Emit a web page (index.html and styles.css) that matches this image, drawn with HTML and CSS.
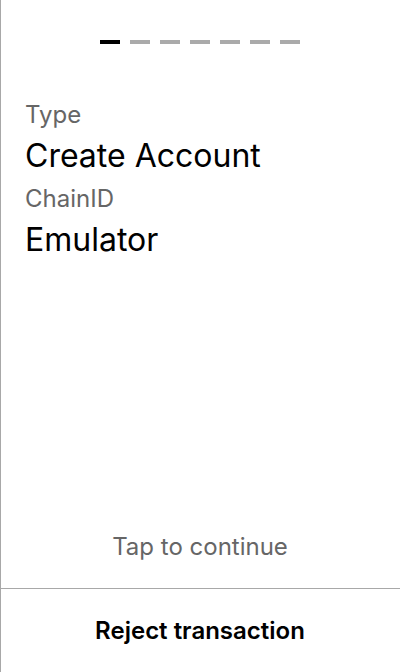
FILE: index.html
```html
<!DOCTYPE html>
<html>
<head>
<meta charset="utf-8">
<link rel="stylesheet" href="styles.css">
</head>
<body>
<div class="screen">
  <div class="main">
    <div class="steps">
      <span class="step active"></span>
      <span class="step"></span>
      <span class="step"></span>
      <span class="step"></span>
      <span class="step"></span>
      <span class="step"></span>
      <span class="step"></span>
    </div>
    <div class="details">
      <div class="label">Type</div>
      <div class="value">Create Account</div>
      <div class="label">ChainID</div>
      <div class="value">Emulator</div>
    </div>
    <div class="hint">Tap to continue</div>
  </div>
  <div class="reject">Reject transaction</div>
</div>
</body>
</html>
```
FILE: styles.css
```css
html, body {
  margin: 0;
  padding: 0;
  background: #fff;
}
body {
  font-family: Inter, "Noto Sans", sans-serif;
  color: #000;
}
.screen {
  width: 400px;
  height: 672px;
  box-sizing: border-box;
  border-left: 1px solid #a8a8a8;
  display: flex;
  flex-direction: column;
}
.main {
  flex: 1;
  display: flex;
  flex-direction: column;
  border-bottom: 1px solid #a8a8a8;
}
.steps {
  display: flex;
  justify-content: center;
  gap: 10px;
  padding-top: 40px;
  margin-left: -1px;
}
.step {
  width: 20px;
  height: 4px;
  background: #aaaaaa;
}
.step.active {
  background: #000;
}
.details {
  padding: 57px 24px 0;
  display: flex;
  flex-direction: column;
}
.label {
  font-size: 24px;
  line-height: 28px;
  color: #666;
  margin-top: 9px;
}
.value {
  font-size: 32px;
  line-height: 40px;
  margin-top: 7px;
}
.details .label:first-child {
  margin-top: 0;
}
.hint {
  margin-top: auto;
  text-align: center;
  font-size: 24px;
  line-height: 28px;
  color: #666;
  padding-bottom: 27px;
  margin-left: -1px;
}
.reject {
  height: 83px;
  display: flex;
  align-items: center;
  justify-content: center;
  font-size: 24px;
  line-height: 28px;
  font-weight: 600;
  margin-left: -1px;
}
```
